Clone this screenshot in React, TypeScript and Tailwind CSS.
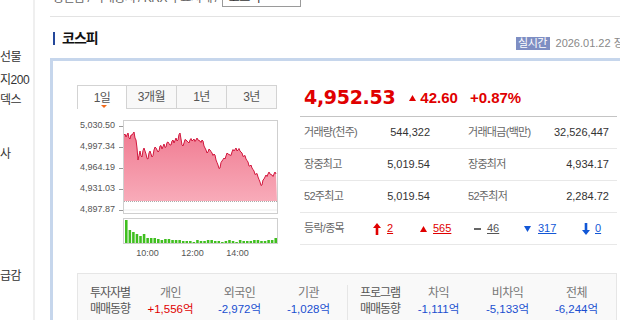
import React from "react";

// 분봉 라인 (차트 박스 안쪽 좌표, 2px 간격)
const lineY = [
  14, 16, 12, 18, 14, 11, 19, 39, 30, 36, 27, 33, 38, 30, 36, 29, 27, 31, 25, 28, 23, 26, 21, 24, 20, 22,
  17, 19, 12, 24, 22, 19, 21, 19, 20, 18, 19, 19, 20, 19, 25, 29, 31, 29, 32, 33, 39, 44, 47, 40, 37, 35,
  33, 34, 31, 30, 27, 29, 30, 32, 35, 38, 41, 45, 47, 50, 53, 56, 61, 64, 58, 54, 53, 53, 54, 53, 53,
];

const volumes = [
  23, 13, 11, 9, 7, 9, 5, 5, 5, 4, 3, 4, 4, 3, 3, 3, 2, 2, 2, 1, 3, 2, 2, 3, 3, 2, 2, 1, 2, 3, 2, 1, 3, 2,
  2, 2, 3, 3, 2, 2, 3, 3, 5,
];

function buildLine() {
  const pts: string[] = [];
  lineY.forEach((y, i) => {
    pts.push(`${i * 2},${y}`);
    const next = lineY[i + 1];
    if (next !== undefined) {
      const jitter = ((i % 3) - 1) * 2;
      pts.push(`${i * 2 + 1},${(y + next) / 2 + jitter}`);
    }
  });
  return pts;
}

function PriceChart() {
  const pts = buildLine();
  const area = `0,80 ${pts.join(" ")} 153,80`;
  return (
    <svg width="153" height="92" viewBox="0 0 153 92" className="block">
      <defs>
        <linearGradient id="fillPink" x1="0" y1="0" x2="0" y2="1">
          <stop offset="0" stopColor="#f07c92" />
          <stop offset="1" stopColor="#f8abb9" />
        </linearGradient>
      </defs>
      <line x1="0" y1="89" x2="153" y2="89" stroke="#ececec" strokeWidth="1" />
      <polygon points={area} fill="url(#fillPink)" />
      <polyline points={pts.join(" ")} fill="none" stroke="#d2183e" strokeWidth="1" />
      <line x1="0" y1="80.5" x2="153" y2="80.5" stroke="#a9a9a9" strokeWidth="1" strokeDasharray="1 1" />
    </svg>
  );
}

function VolumeChart() {
  const step = 153 / volumes.length;
  return (
    <svg width="153" height="24" viewBox="0 0 153 24" className="block">
      {volumes.map((h, i) => (
        <rect key={i} x={1 + i * step} y={24 - h} width={step - 1} height={h} fill="#3fbf1f" />
      ))}
    </svg>
  );
}

function UpArrow({ color }: { color: string }) {
  return (
    <svg width="8" height="12" viewBox="0 0 8 12">
      <polygon points="4,0 8,5 5.3,5 5.3,12 2.7,12 2.7,5 0,5" fill={color} />
    </svg>
  );
}

function DownArrow({ color }: { color: string }) {
  return (
    <svg width="8" height="12" viewBox="0 0 8 12">
      <polygon points="4,12 8,7 5.3,7 5.3,0 2.7,0 2.7,7 0,7" fill={color} />
    </svg>
  );
}

function Tri({ up, color }: { up: boolean; color: string }) {
  return (
    <svg width="7" height="6" viewBox="0 0 7 6">
      <polygon points={up ? "3.5,0 7,6 0,6" : "0,0 7,0 3.5,6"} fill={color} />
    </svg>
  );
}

const yLabels = ["5,030.50", "4,997.34", "4,964.19", "4,931.03", "4,897.87"];

const stats = [
  ["거래량(천주)", "544,322", "거래대금(백만)", "32,526,447"],
  ["장중최고", "5,019.54", "장중최저", "4,934.17"],
  ["52주최고", "5,019.54", "52주최저", "2,284.72"],
];

export default function App() {
  return (
    <div className="w-[620px] h-[320px] overflow-hidden bg-white flex font-['Liberation_Sans','Noto_Sans_CJK_KR',sans-serif] text-[#333]">
      <aside className="w-[35px] shrink-0 border-r-2 border-[#efefef] text-[12px] tracking-[-0.5px] flex flex-col pt-[47px] overflow-hidden whitespace-nowrap">
        <div className="h-[20px] leading-[20px]">선물</div>
        <div className="h-[20px] leading-[20px] mt-[3px]">지200</div>
        <div className="h-[20px] leading-[20px]">덱스</div>
        <div className="h-[20px] leading-[20px] mt-[34px]">사</div>
        <div className="h-[20px] leading-[20px] mt-[102px]">급감</div>
      </aside>

      <main className="w-[594px] shrink-0 ml-[15px]">
        {/* 경로 */}
        <div className="-mt-[11px] h-[28px] border-b border-[#e3e3e3] flex items-start">
          <div className="h-[18px] flex items-center pl-[3px] text-[12px] text-[#666] tracking-[-0.5px] whitespace-nowrap">
            증권홈 / 국내증시 / KRX 주요시세 /
            <div className="ml-[4px] w-[79px] h-[18px] border border-[#9a9a9a] flex items-center justify-between px-[6px] text-[#333]">
              <span>코스피</span>
              <span className="text-[9px]">▼</span>
            </div>
          </div>
        </div>

        {/* 제목 */}
        <div className="mt-[13px] flex justify-between items-start">
          <div className="flex items-center h-[16px]">
            <span className="ml-[3px] w-[2px] h-[13px] bg-[#24479a]" />
            <h1 className="ml-[7px] text-[14px] font-bold leading-[16px] tracking-[-1px] text-[#111]">코스피</h1>
          </div>
          <div className="mt-[7px] flex items-center h-[12px] whitespace-nowrap">
            <span className="w-[34px] h-[13px] bg-[#7e8ec3] text-white text-[11px] leading-[13px] text-center tracking-[-0.5px]">
              실시간
            </span>
            <span className="ml-[6px] text-[11px] text-[#888]">2026.01.22 장마감</span>
          </div>
        </div>

        {/* 본문 박스 */}
        <div className="mt-[9px] border-[3px] border-[#c6d6ec] px-[24px] pt-[24px] pb-[20px]">
          <div className="flex justify-between">
            {/* 차트 */}
            <div className="w-[201px]">
              <div className="flex h-[24px] text-[12px] text-[#555] tracking-[-0.5px]">
                <div className="relative w-[50px] border border-b-0 border-[#d3d3d3] bg-white flex items-center justify-center">
                  1일
                  <span className="absolute bottom-[1px] left-[23px] w-0 h-0 border-x-[3px] border-x-transparent border-t-[3px] border-t-[#f26a1b]" />
                </div>
                <div className="w-[50px] border border-l-0 border-[#d3d3d3] bg-[#f8f8f8] flex items-center justify-center">3개월</div>
                <div className="w-[50px] border border-l-0 border-[#d3d3d3] bg-[#f8f8f8] flex items-center justify-center">1년</div>
                <div className="w-[50px] border border-l-0 border-[#d3d3d3] bg-[#f8f8f8] flex items-center justify-center">3년</div>
              </div>

              <div className="flex mt-[11px]">
                <div className="w-[46px] h-[96px] flex flex-col justify-between text-[9px] text-[#555]">
                  {yLabels.map((l) => (
                    <div key={l} className="h-[12px] flex items-center justify-end gap-[4px]">
                      <span>{l}</span>
                      <span className="w-[4px] h-px bg-[#999]" />
                    </div>
                  ))}
                </div>
                <div className="w-[155px] h-[94px] border border-[#cfcfcf]">
                  <PriceChart />
                </div>
              </div>

              <div className="ml-[46px] mt-[2px] w-[155px] h-[26px] border border-[#cfcfcf]">
                <VolumeChart />
              </div>
              <div className="ml-[46px] w-[155px] h-[16px] flex text-[9px] text-[#555]">
                <span className="w-[2px]" />
                {["10:00", "12:00", "14:00"].map((t) => (
                  <span key={t} className="w-[45px] text-center leading-[18px]">
                    {t}
                  </span>
                ))}
              </div>
            </div>

            {/* 시세 */}
            <div className="w-[317px]">
              <div className="h-[32px] border-b border-[#c4c4c4] flex items-center pb-[6px] pl-[4px] text-[#e00000] font-bold whitespace-nowrap">
                <span className="font-['DejaVu_Sans',sans-serif] text-[19px] leading-none tracking-[-0.3px]">4,952.53</span>
                <span className="ml-[14px]">
                  <Tri up color="#e00000" />
                </span>
                <span className="ml-[4px] text-[15px] leading-none">42.60</span>
                <span className="ml-[12px] text-[15px] leading-none">+0.87%</span>
              </div>

              {stats.map((r) => (
                <div key={r[0]} className="h-[32px] border-b border-[#e8e8e8] flex items-center pl-[4px] pr-[8px] text-[11px] whitespace-nowrap">
                  <span className="w-[70px] text-[#666] tracking-[-0.7px]">{r[0]}</span>
                  <span className="w-[56px] text-right">{r[1]}</span>
                  <span className="ml-[38px] w-[70px] text-[#666] tracking-[-0.7px]">{r[2]}</span>
                  <span className="flex-1 text-right">{r[3]}</span>
                </div>
              ))}

              <div className="h-[32px] border-b border-[#e8e8e8] flex items-center pl-[4px] text-[11px] whitespace-nowrap">
                <span className="w-[69px] text-[#666] tracking-[-0.7px]">등락/종목</span>
                <span className="w-[47px] flex items-center gap-[6px] text-[#e00000]">
                  <UpArrow color="#e00000" />
                  <a className="underline">2</a>
                </span>
                <span className="w-[54px] flex items-center gap-[6px] text-[#e00000]">
                  <Tri up color="#e00000" />
                  <a className="underline">565</a>
                </span>
                <span className="w-[50px] flex items-center gap-[6px] text-[#555]">
                  <span className="w-[7px] h-[2px] bg-[#666]" />
                  <a className="underline">46</a>
                </span>
                <span className="w-[58px] flex items-center gap-[7px] text-[#1257d6]">
                  <Tri up={false} color="#1257d6" />
                  <a className="underline">317</a>
                </span>
                <span className="flex items-center gap-[5px] text-[#1257d6]">
                  <DownArrow color="#1257d6" />
                  <a className="underline">0</a>
                </span>
              </div>
            </div>
          </div>

          {/* 매매동향 */}
          <div className="mt-[13px] h-[60px] border border-[#e6e6e6] bg-[#f9f9f9] flex pt-[11px] text-[12px] leading-[16px] whitespace-nowrap">
            <div className="w-[270px] border-r border-[#e6e6e6] flex pl-[12px]">
              <div className="w-[46px] text-[#555] tracking-[-1px]">
                투자자별
                <br />
                매매동향
              </div>
              {[
                ["개인", "+1,556", "text-[#e00000]"],
                ["외국인", "-2,972", "text-[#1a4fd0]"],
                ["기관", "-1,028", "text-[#1a4fd0]"],
              ].map(([h, v, c]) => (
                <div key={h} className="w-[69px] text-center">
                  <div className="text-[#777] tracking-[-0.5px]">{h}</div>
                  <div className={`${c} text-[11.5px]`}>{v}억</div>
                </div>
              ))}
            </div>
            <div className="flex-1 flex pl-[12px]">
              <div className="w-[44px] text-[#555] tracking-[-1px]">
                프로그램
                <br />
                매매동향
              </div>
              {[
                ["차익", "-1,111"],
                ["비차익", "-5,133"],
                ["전체", "-6,244"],
              ].map(([h, v]) => (
                <div key={h} className="w-[69px] text-center">
                  <div className="text-[#777] tracking-[-0.5px]">{h}</div>
                  <div className="text-[#1a4fd0] text-[11.5px]">{v}억</div>
                </div>
              ))}
            </div>
          </div>
        </div>
      </main>
    </div>
  );
}
